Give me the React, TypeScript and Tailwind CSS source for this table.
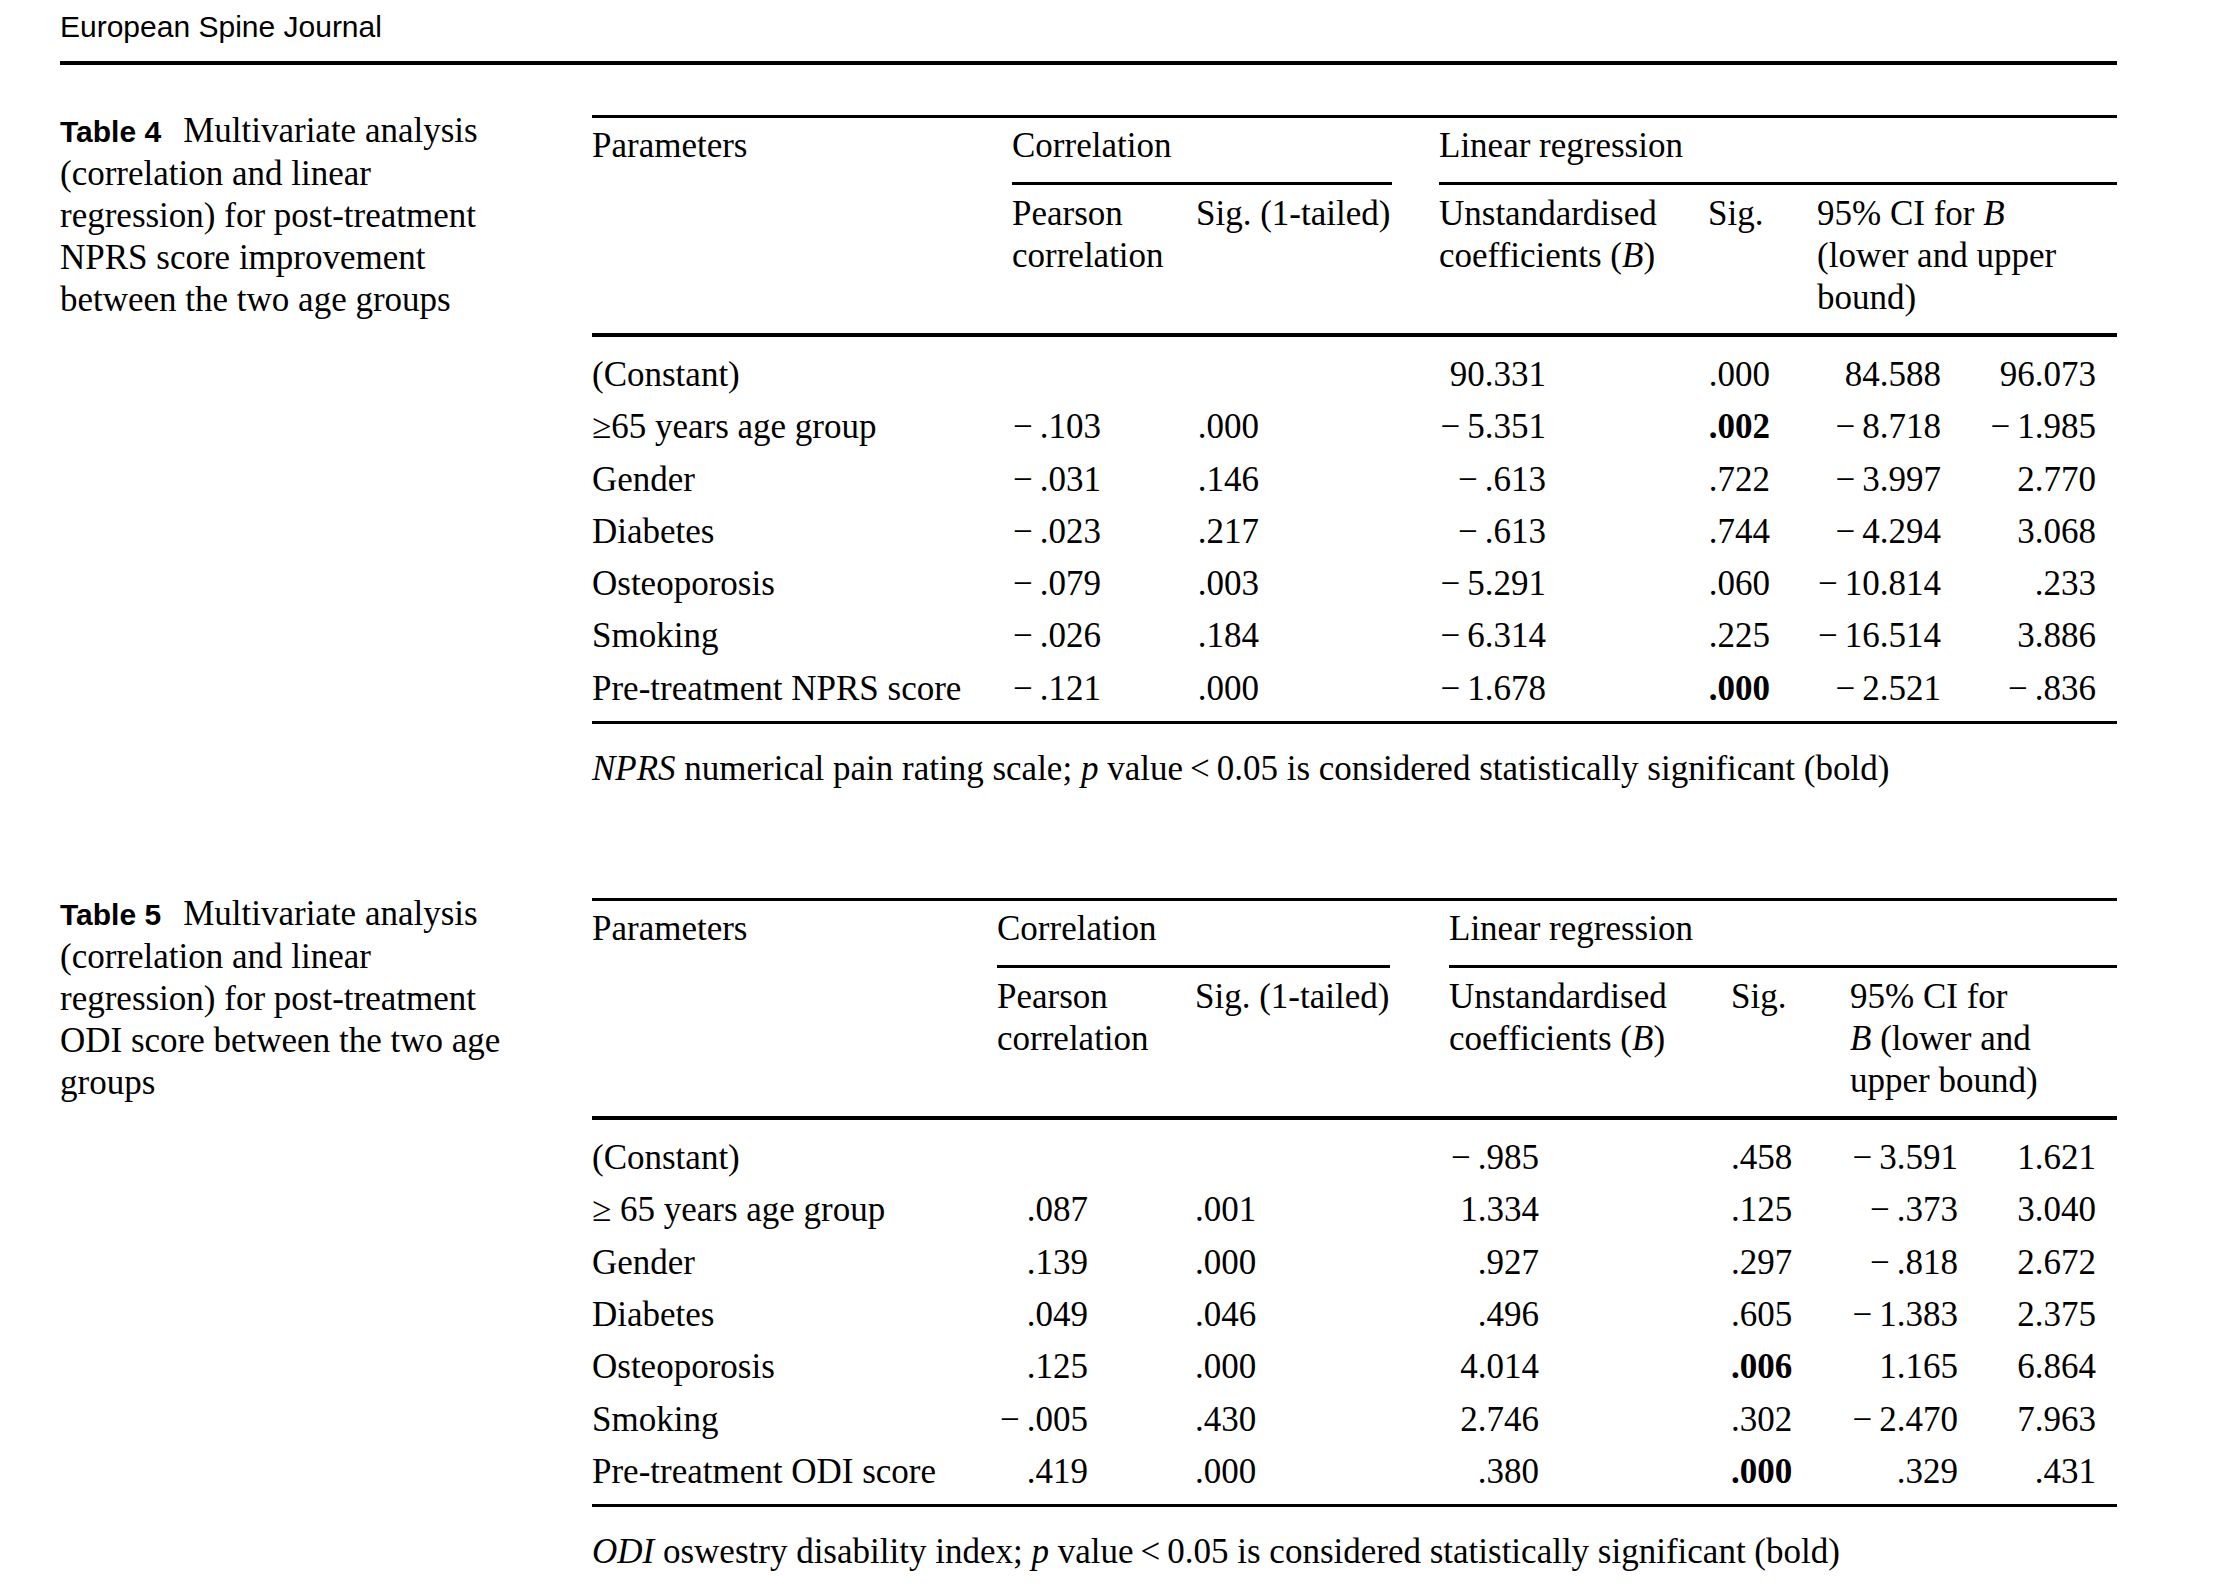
import React from "react";

const M = "\u2212\u2009";

type Cfg = {
  cols: string;
  corrPr: string;
  prs: string[];
  ciHeader: React.ReactNode;
  rows: string[][];
  footnote: React.ReactNode;
};

const serif = { fontFamily: '"Liberation Serif", "Times New Roman", serif' } as const;

function DataTable({ cfg }: { cfg: Cfg }) {
  return (
    <div className="flex-1 mt-[5px]">
      <div className={`grid ${cfg.cols} border-t-[3px] border-b-[4px] border-black leading-[42px]`}>
        <div className="row-span-2 pt-[7px]">Parameters</div>
        <div className={`col-span-2 pt-[7px] ${cfg.corrPr}`}>
          <div className="border-b-[3px] border-black pb-[15px]">Correlation</div>
        </div>
        <div className="col-span-4 pt-[7px]">
          <div className="border-b-[3px] border-black pb-[15px]">Linear regression</div>
        </div>
        <div className="pt-[8px] pb-[14px]">
          Pearson
          <br />
          correlation
        </div>
        <div className="pt-[8px] pb-[14px]">Sig. (1-tailed)</div>
        <div className="pt-[8px] pb-[14px]">
          Unstandardised
          <br />
          coefficients (<i>B</i>)
        </div>
        <div className="pt-[8px] pb-[14px]">Sig.</div>
        <div className="col-span-2 pt-[8px] pb-[14px]">{cfg.ciHeader}</div>
      </div>
      <div className={`grid ${cfg.cols} pt-[12px] pb-[6px] border-b-[3px] border-black leading-[52.3px]`}>
        {cfg.rows.map((r, i) => (
          <React.Fragment key={i}>
            <div className="whitespace-nowrap">{r[0]}</div>
            {r.slice(1).map((v, j) => {
              const bold = v.startsWith("*");
              const t = bold ? v.slice(1) : v;
              return (
                <div
                  key={j}
                  className={`text-right whitespace-nowrap ${cfg.prs[j]} ${bold ? "font-bold" : ""}`}
                >
                  {t}
                </div>
              );
            })}
          </React.Fragment>
        ))}
      </div>
      <div className="pt-[24px] leading-[42px]">{cfg.footnote}</div>
    </div>
  );
}

const t4: Cfg = {
  cols: "grid-cols-[420px_184px_243px_269px_109px_146px_154px]",
  corrPr: "pr-[47px]",
  prs: ["pr-[95px]", "pr-[180px]", "pr-[162px]", "pr-[47px]", "pr-[22px]", "pr-[21px]"],
  ciHeader: (
    <>
      95% CI for <i>B</i>
      <br />
      (lower and upper
      <br />
      bound)
    </>
  ),
  rows: [
    ["(Constant)", "", "", "90.331", ".000", "84.588", "96.073"],
    ["\u226565 years age group", M + ".103", ".000", M + "5.351", "*.002", M + "8.718", M + "1.985"],
    ["Gender", M + ".031", ".146", M + ".613", ".722", M + "3.997", "2.770"],
    ["Diabetes", M + ".023", ".217", M + ".613", ".744", M + "4.294", "3.068"],
    ["Osteoporosis", M + ".079", ".003", M + "5.291", ".060", M + "10.814", ".233"],
    ["Smoking", M + ".026", ".184", M + "6.314", ".225", M + "16.514", "3.886"],
    ["Pre-treatment NPRS score", M + ".121", ".000", M + "1.678", "*.000", M + "2.521", M + ".836"],
  ],
  footnote: (
    <>
      <i>NPRS</i> numerical pain rating scale; <i>p</i> value{"\u2009"}&lt;{"\u2009"}0.05 is considered
      statistically significant (bold)
    </>
  ),
};

const t5: Cfg = {
  cols: "grid-cols-[405px_198px_254px_282px_119px_130px_137px]",
  corrPr: "pr-[59px]",
  prs: ["pr-[107px]", "pr-[193px]", "pr-[192px]", "pr-[58px]", "pr-[22px]", "pr-[21px]"],
  ciHeader: (
    <>
      95% CI for
      <br />
      <i>B</i> (lower and
      <br />
      upper bound)
    </>
  ),
  rows: [
    ["(Constant)", "", "", M + ".985", ".458", M + "3.591", "1.621"],
    ["\u2265 65 years age group", ".087", ".001", "1.334", ".125", M + ".373", "3.040"],
    ["Gender", ".139", ".000", ".927", ".297", M + ".818", "2.672"],
    ["Diabetes", ".049", ".046", ".496", ".605", M + "1.383", "2.375"],
    ["Osteoporosis", ".125", ".000", "4.014", "*.006", "1.165", "6.864"],
    ["Smoking", M + ".005", ".430", "2.746", ".302", M + "2.470", "7.963"],
    ["Pre-treatment ODI score", ".419", ".000", ".380", "*.000", ".329", ".431"],
  ],
  footnote: (
    <>
      <i>ODI</i> oswestry disability index; <i>p</i> value{"\u2009"}&lt;{"\u2009"}0.05 is considered
      statistically significant (bold)
    </>
  ),
};

function Caption({ num, lines }: { num: string; lines: string[] }) {
  return (
    <div className="w-[532px] shrink-0 leading-[42px]">
      <span
        className="font-bold text-[30px] pr-[22px]"
        style={{ fontFamily: '"Liberation Sans", Arial, sans-serif' }}
      >
        Table {num}
      </span>
      {lines.map((l, i) => (
        <React.Fragment key={i}>
          {i > 0 && <br />}
          {l}
        </React.Fragment>
      ))}
    </div>
  );
}

export default function App() {
  return (
    <div className="min-h-screen w-full bg-white text-black pl-[60px] pr-[111px] pt-[9px]">
      <div
        className="text-[30px] leading-[36px]"
        style={{ fontFamily: '"Liberation Sans", Arial, sans-serif' }}
      >
        European Spine Journal
      </div>
      <div className="mt-[16px] h-[4px] bg-black" />
      <div className="text-[35px]" style={serif}>
        <div className="flex mt-[45px]">
          <Caption
            num="4"
            lines={[
              "Multivariate analysis",
              "(correlation and linear",
              "regression) for post-treatment",
              "NPRS score improvement",
              "between the two age groups",
            ]}
          />
          <DataTable cfg={t4} />
        </div>
        <div className="flex mt-[103px]">
          <Caption
            num="5"
            lines={[
              "Multivariate analysis",
              "(correlation and linear",
              "regression) for post-treatment",
              "ODI score between the two age",
              "groups",
            ]}
          />
          <DataTable cfg={t5} />
        </div>
      </div>
    </div>
  );
}
